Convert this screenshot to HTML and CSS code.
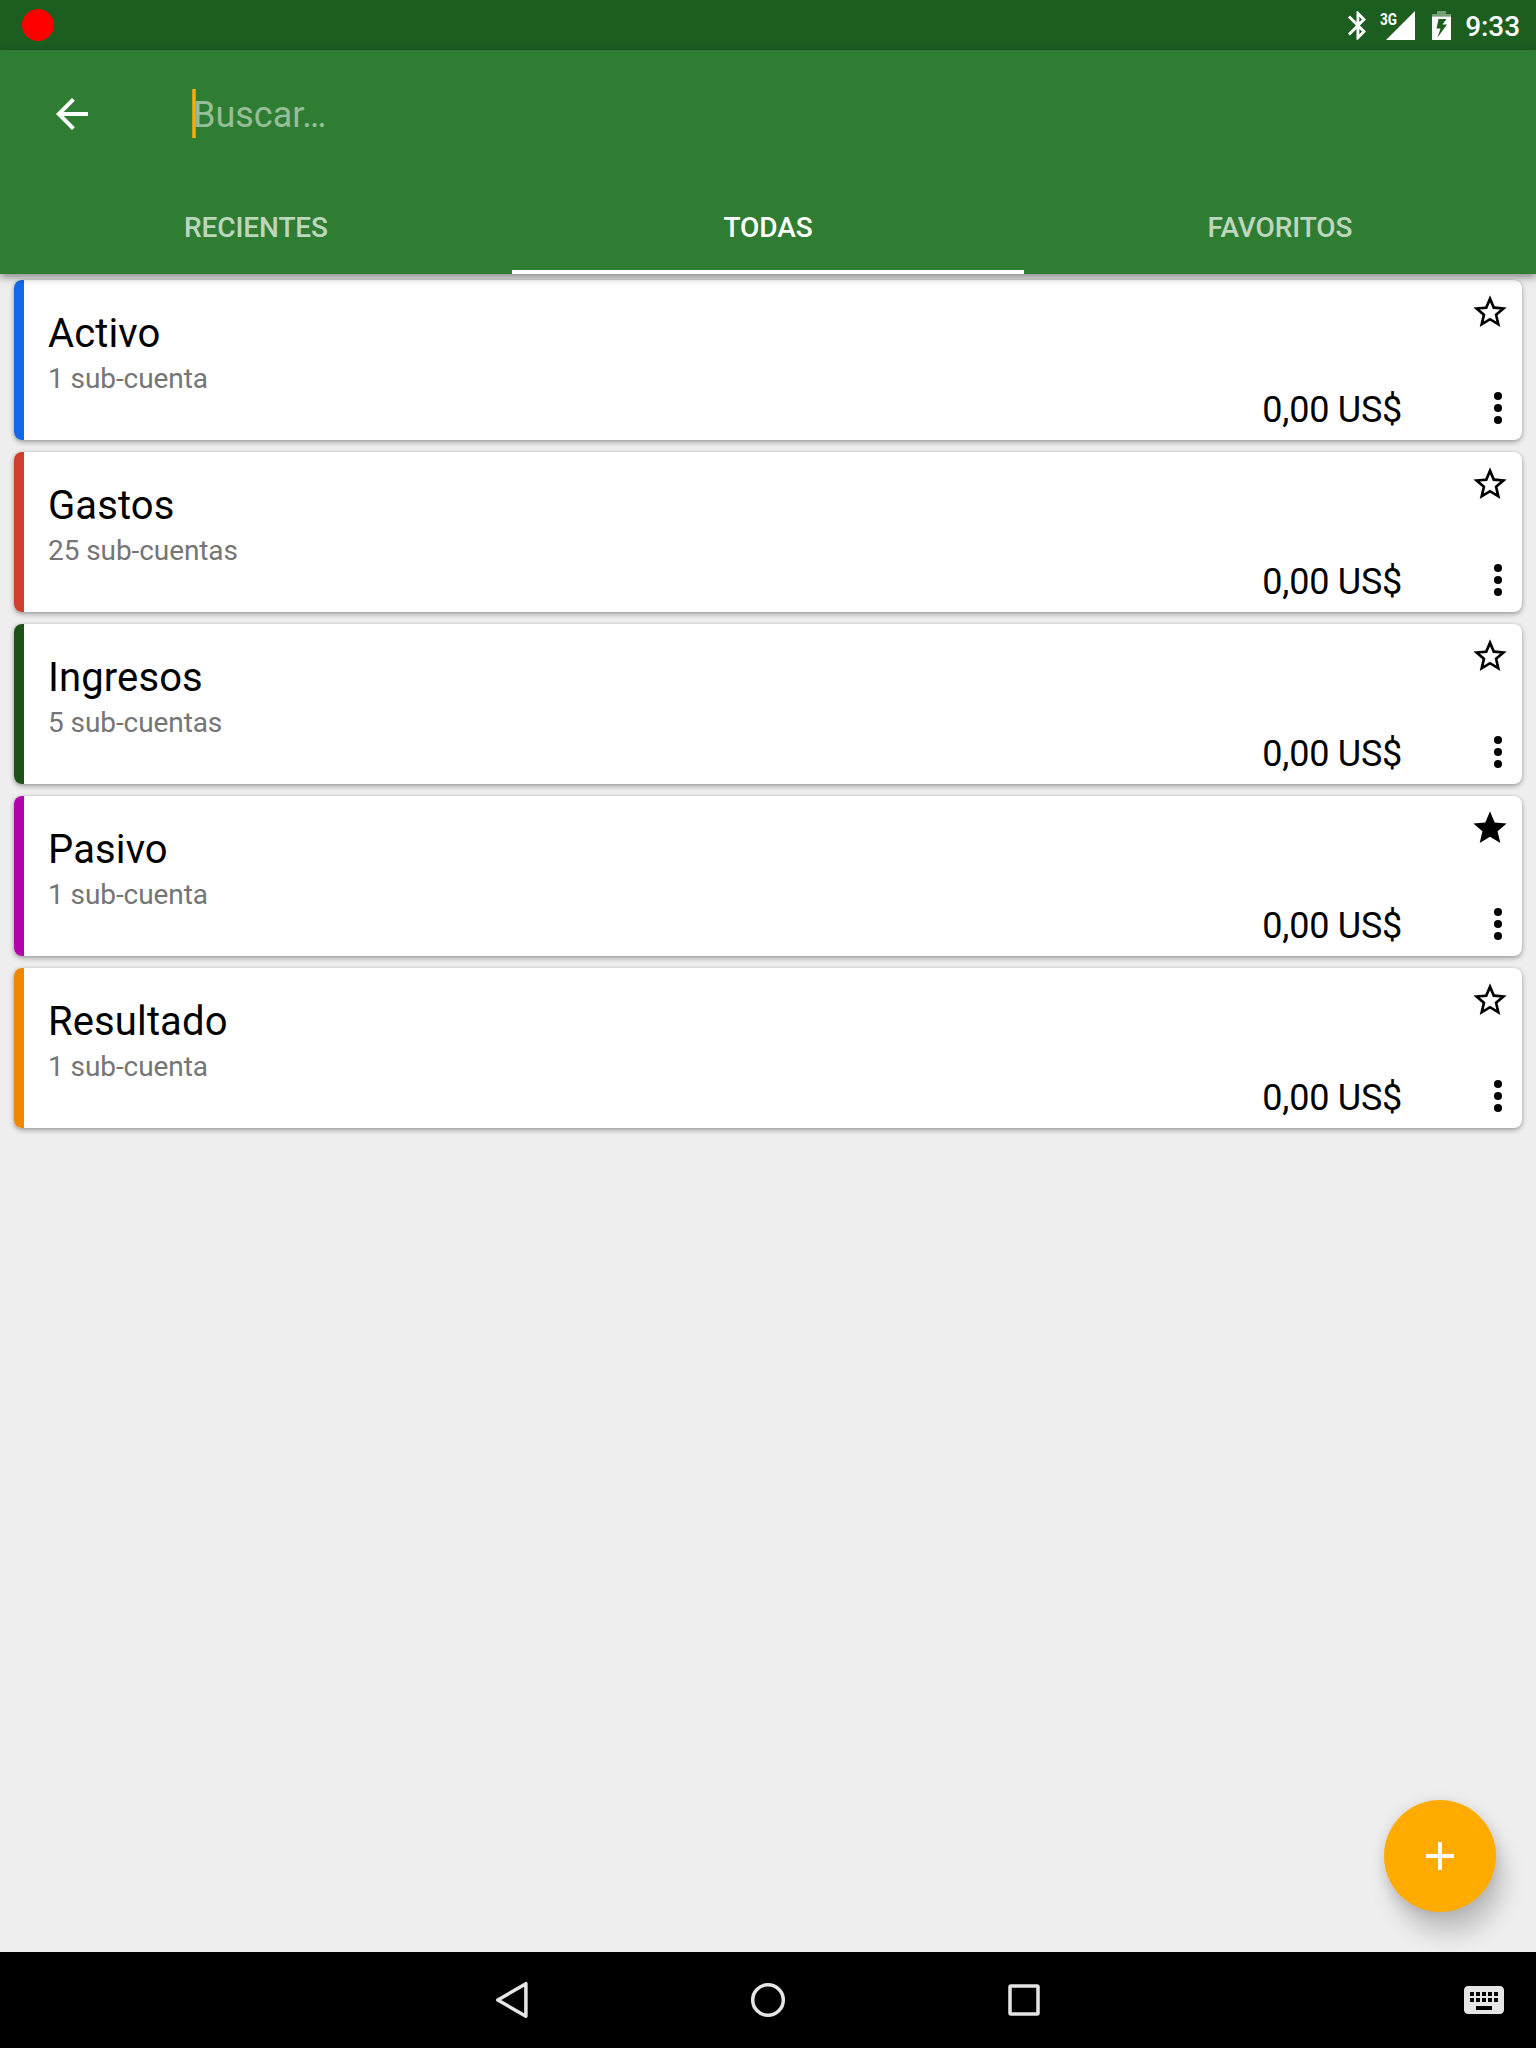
FILE: index.html
```html
<!DOCTYPE html>
<html lang="es">
<head>
<meta charset="utf-8">
<title>Cuentas</title>
<link rel="stylesheet" href="styles.css">
</head>
<body>
<svg class="symbols" aria-hidden="true">
  <symbol id="star-outline" viewBox="0 0 24 24"><path d="M22 9.24l-7.19-.62L12 2 9.19 8.63 2 9.24l5.46 4.73L5.82 21 12 17.27 18.18 21l-1.63-7.03L22 9.24zM12 15.4l-3.76 2.27 1-4.28-3.32-2.88 4.38-.38L12 6.1l1.71 4.04 4.38.38-3.32 2.88 1 4.28L12 15.4z"/></symbol>
  <symbol id="star" viewBox="0 0 24 24"><path d="M12 17.27L18.18 21l-1.64-7.03L22 9.24l-7.19-.61L12 2 9.19 8.63 2 9.24l5.46 4.73L5.82 21z"/></symbol>
  <symbol id="more" viewBox="0 0 24 24"><circle cx="12" cy="6" r="2"/><circle cx="12" cy="12" r="2"/><circle cx="12" cy="18" r="2"/></symbol>
</svg>
<div class="screen">
  <div class="status-bar">
    <span class="record-dot"></span>
    <div class="status-icons">
      <svg class="bluetooth" viewBox="5 2 12.71 20"><path d="M17.71 7.71L12 2h-1v7.59L6.41 5 5 6.41 10.59 12 5 17.59 6.41 19 11 14.41V22h1l5.71-5.71-4.3-4.29 4.3-4.29zM13 5.83l1.88 1.88L13 9.59V5.83zm1.88 10.46L13 18.17v-3.76l1.88 1.88z"/></svg>
      <div class="signal">
        <span class="network">3G</span>
        <svg class="signal-shape" viewBox="0 0 29 29"><path d="M0 29L29 0v29z"/></svg>
      </div>
      <svg class="battery" viewBox="0 0 19 29"><path class="battery-empty" d="M5 0h9v3h5v2.500H0V3h5z"/><path fill-rule="evenodd" d="M0 5.500h19V29H0zM6.500 8L4.500 17.500h4L5.500 26.500 15 13.500h-4.500L14.500 8z"/></svg>
      <span class="clock">9:33</span>
    </div>
  </div>
  <header class="app-bar">
    <div class="toolbar">
      <svg class="back" viewBox="0 0 24 24"><path d="M20 11H7.830l5.590-5.590L12 4l-8 8 8 8 1.410-1.410L7.830 13H20v-2z"/></svg>
      <div class="search"><span class="caret"></span><span class="hint">Buscar…</span></div>
    </div>
    <nav class="tabs">
      <div class="tab">RECIENTES</div>
      <div class="tab active">TODAS</div>
      <div class="tab">FAVORITOS</div>
    </nav>
  </header>
  <main class="accounts">
    <article class="card blue">
      <div class="info"><h2>Activo</h2><p>1 sub-cuenta</p></div>
      <div class="balance">0,00 US$</div>
      <div class="actions"><svg class="fav"><use href="#star-outline"/></svg><svg class="menu"><use href="#more"/></svg></div>
    </article>
    <article class="card red">
      <div class="info"><h2>Gastos</h2><p>25 sub-cuentas</p></div>
      <div class="balance">0,00 US$</div>
      <div class="actions"><svg class="fav"><use href="#star-outline"/></svg><svg class="menu"><use href="#more"/></svg></div>
    </article>
    <article class="card green">
      <div class="info"><h2>Ingresos</h2><p>5 sub-cuentas</p></div>
      <div class="balance">0,00 US$</div>
      <div class="actions"><svg class="fav"><use href="#star-outline"/></svg><svg class="menu"><use href="#more"/></svg></div>
    </article>
    <article class="card purple">
      <div class="info"><h2>Pasivo</h2><p>1 sub-cuenta</p></div>
      <div class="balance">0,00 US$</div>
      <div class="actions"><svg class="fav"><use href="#star"/></svg><svg class="menu"><use href="#more"/></svg></div>
    </article>
    <article class="card orange">
      <div class="info"><h2>Resultado</h2><p>1 sub-cuenta</p></div>
      <div class="balance">0,00 US$</div>
      <div class="actions"><svg class="fav"><use href="#star-outline"/></svg><svg class="menu"><use href="#more"/></svg></div>
    </article>
    <div class="fab"><svg viewBox="0 0 24 24"><path d="M19 13h-6v6h-2v-6H5v-2h6V5h2v6h6v2z"/></svg></div>
  </main>
  <footer class="nav-bar">
    <svg class="nav-icon" viewBox="0 0 48 48"><path d="M9.800 24L37.900 7.700v32.600z"/></svg>
    <svg class="nav-icon" viewBox="0 0 48 48"><circle cx="24" cy="24" r="15.300"/></svg>
    <svg class="nav-icon" viewBox="0 0 48 48"><rect x="10" y="10" width="28" height="28" rx="1"/></svg>
    <svg class="keyboard" viewBox="0 0 24 24"><path d="M20 5H4c-1.100 0-1.990.9-1.990 2L2 17c0 1.100.9 2 2 2h16c1.100 0 2-.9 2-2V7c0-1.100-.9-2-2-2zm-9 3h2v2h-2V8zm0 3h2v2h-2v-2zM8 8h2v2H8V8zm0 3h2v2H8v-2zm-1 2H5v-2h2v2zm0-3H5V8h2v2zm9 7H8v-2h8v2zm0-4h-2v-2h2v2zm0-3h-2V8h2v2zm3 3h-2v-2h2v2zm0-3h-2V8h2v2z"/></svg>
  </footer>
</div>
</body>
</html>
```
FILE: styles.css
```css
* { box-sizing: border-box; }
body { margin: 0; font-family: Roboto, "Liberation Sans", sans-serif; }
svg { display: block; flex: none; }
.symbols { position: absolute; width: 0; height: 0; }

.screen { width: 1536px; height: 2048px; display: flex; flex-direction: column; background: #eee; overflow: hidden; }

.status-bar { height: 50px; flex: none; display: flex; justify-content: space-between; align-items: center; padding: 0 16px 0 22px; background: #1b5e20; color: #fff; fill: #fff; }
.record-dot { width: 32px; height: 32px; border-radius: 50%; background: #f00; }
.status-icons { display: flex; align-items: center; }
.bluetooth { width: 18px; height: 29px; margin-right: 14px; }
.signal { position: relative; width: 35px; height: 29px; margin-right: 17px; display: flex; justify-content: flex-end; }
.signal-shape { width: 29px; height: 29px; }
.network { position: absolute; left: 0; top: 0; font-size: 17px; line-height: 16px; font-weight: 700; transform: scaleX(.8); transform-origin: left; }
.battery { width: 19px; height: 29px; margin-right: 14px; }
.battery-empty { opacity: .4; }
.clock { font-size: 28px; line-height: 50px; font-weight: 500; padding-top: 3px; letter-spacing: -.1px; }

.app-bar { position: relative; z-index: 1; height: 224px; flex: none; display: flex; flex-direction: column; background: #2e7d32; box-shadow: 0 3px 8px rgba(0, 0, 0, .45); }
.toolbar { height: 128px; flex: none; display: flex; align-items: center; padding-left: 48px; }
.back { width: 48px; height: 48px; fill: #fff; }
.search { display: flex; align-items: center; margin-left: 96px; }
.caret { width: 4px; height: 49px; margin: 0 -3px 2px 0; background: linear-gradient(90deg, #caa016 1px, #ffab00 1px 3px, #caa016 3px); }
.hint { font-size: 36px; line-height: 42px; padding-top: 2px; color: rgba(255, 255, 255, .5); }
.tabs { flex: 1; display: grid; grid-template-columns: repeat(3, 1fr); }
.tab { display: flex; align-items: center; justify-content: center; padding-top: 6px; font-size: 28px; font-weight: 500; letter-spacing: -.1px; color: rgba(255, 255, 255, .7); border-bottom: 4px solid transparent; }
.tab.active { color: #fff; border-bottom-color: #fff; }

.accounts { position: relative; flex: 1; display: flex; flex-direction: column; gap: 12px; padding: 6px 14px 0; }
.card { height: 160px; flex: none; display: flex; border-radius: 8px; overflow: hidden; background: #fff; box-shadow: 0 2px 5px rgba(0, 0, 0, .34), 0 0 2px rgba(0, 0, 0, .12); }
.card::before { content: ""; width: 10px; flex: none; background: var(--accent); }
.blue { --accent: #1469eb; }
.red { --accent: #d03f2b; }
.green { --accent: #1e5118; }
.purple { --accent: #b303ab; }
.orange { --accent: #ef8800; }
.info { flex: 1; padding: 30px 0 0 24px; }
.info h2 { margin: 0; font-size: 40px; line-height: 47px; font-weight: 400; letter-spacing: .12px; color: #000; }
.info p { margin: 0; padding-top: 5px; font-size: 28px; line-height: 33px; letter-spacing: -.08px; color: #757575; }
.balance { align-self: flex-end; padding-bottom: 9px; font-size: 36px; line-height: 42px; letter-spacing: -.25px; color: #000; }
.actions { width: 120px; display: flex; flex-direction: column; justify-content: space-between; align-items: flex-end; padding: 12px 0 8px; }
.fav { width: 40px; height: 40px; margin-right: 12px; }
.menu { width: 48px; height: 48px; }

.fab { position: absolute; right: 40px; bottom: 40px; width: 112px; height: 112px; border-radius: 50%; display: flex; align-items: center; justify-content: center; background: #ffab00; box-shadow: 8px 22px 22px rgba(0, 0, 0, .18), 0 2px 14px rgba(0, 0, 0, .13); }
.fab svg { width: 48px; height: 48px; fill: #fff; }

.nav-bar { position: relative; height: 96px; flex: none; display: flex; align-items: center; justify-content: center; gap: 208px; background: #000; }
.nav-icon { width: 48px; height: 48px; fill: none; stroke: #e6e6e6; stroke-width: 3.500; stroke-linejoin: round; }
.keyboard { position: absolute; right: 28px; width: 48px; height: 48px; fill: #e6e6e6; }
```
